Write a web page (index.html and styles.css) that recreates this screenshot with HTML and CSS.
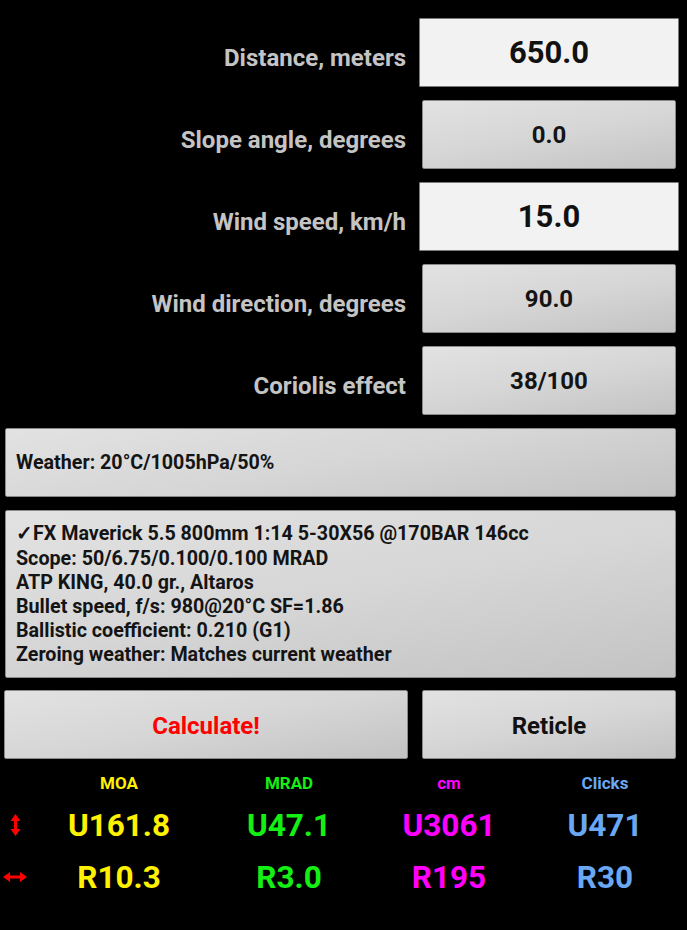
FILE: index.html
```html
<!DOCTYPE html>
<html>
<head>
<meta charset="utf-8">
<link rel="stylesheet" href="styles.css">
</head>
<body>
<div class="app">
  <div class="form">
    <div class="row">
      <div class="label">Distance, meters</div>
      <div class="field"><div class="edit">650.0</div></div>
    </div>
    <div class="row">
      <div class="label">Slope angle, degrees</div>
      <div class="field"><div class="btn">0.0</div></div>
    </div>
    <div class="row">
      <div class="label">Wind speed, km/h</div>
      <div class="field"><div class="edit">15.0</div></div>
    </div>
    <div class="row">
      <div class="label">Wind direction, degrees</div>
      <div class="field"><div class="btn">90.0</div></div>
    </div>
    <div class="row">
      <div class="label">Coriolis effect</div>
      <div class="field"><div class="btn">38/100</div></div>
    </div>
  </div>
  <div class="wide btn weather">Weather: 20°C/1005hPa/50%</div>
  <div class="wide btn info">
    <div>✓FX Maverick 5.5 800mm 1:14 5-30X56 @170BAR 146cc</div>
    <div>Scope: 50/6.75/0.100/0.100 MRAD</div>
    <div>ATP KING, 40.0 gr., Altaros</div>
    <div>Bullet speed, f/s: 980@20°C SF=1.86</div>
    <div>Ballistic coefficient: 0.210 (G1)</div>
    <div>Zeroing weather: Matches current weather</div>
  </div>
  <div class="actions">
    <div class="btn action calc">Calculate!</div>
    <div class="btn action reticle">Reticle</div>
  </div>
  <div class="results">
    <div class="cell"></div>
    <div class="cell head moa">MOA</div>
    <div class="cell head mrad">MRAD</div>
    <div class="cell head cm">cm</div>
    <div class="cell head clicks">Clicks</div>

    <div class="cell icon">
      <svg width="11" height="22" viewBox="0 0 11 22"><path d="M5.5 0 L10.5 7 L7 7 L7 15 L10.5 15 L5.5 22 L0.5 15 L4 15 L4 7 L0.5 7 Z" fill="#ff0000"/></svg>
    </div>
    <div class="cell val moa">U161.8</div>
    <div class="cell val mrad">U47.1</div>
    <div class="cell val cm">U3061</div>
    <div class="cell val clicks">U471</div>

    <div class="cell icon">
      <svg width="24" height="10" viewBox="0 0 24 10"><path d="M0 5 L7 0 L7 3.5 L17 3.5 L17 0 L24 5 L17 10 L17 6.5 L7 6.5 L7 10 Z" fill="#ff0000"/></svg>
    </div>
    <div class="cell val moa">R10.3</div>
    <div class="cell val mrad">R3.0</div>
    <div class="cell val cm">R195</div>
    <div class="cell val clicks">R30</div>
  </div>
</div>
</body>
</html>
```

FILE: styles.css
```css
html, body {
  margin: 0;
  padding: 0;
  background: #000;
}
body {
  font-family: Roboto, "Noto Sans", "Liberation Sans", sans-serif;
  font-weight: 700;
  width: 687px;
  height: 930px;
  overflow: hidden;
}
.app {
  display: flex;
  flex-direction: column;
  padding-top: 18px;
}
.form {
  display: flex;
  flex-direction: column;
  gap: 13px;
}
.row {
  display: flex;
  align-items: center;
  height: 69px;
}
.label {
  width: 406px;
  text-align: right;
  color: #c4c4c4;
  font-size: 24px;
  padding-top: 10px;
}
.field {
  margin-left: 16px;
  width: 254px;
  height: 69px;
  display: flex;
}
.btn {
  box-sizing: border-box;
  background: linear-gradient(170deg, #e2e2e2 0%, #d6d6d6 50%, #c3c3c3 100%);
  border: 1px solid #8a8a8a;
  border-radius: 2px;
  color: #141414;
}
.field .btn {
  flex: 1;
  display: flex;
  align-items: center;
  justify-content: center;
  font-size: 24px;
}
.edit {
  box-sizing: border-box;
  flex: 1;
  margin: 0 -3px;
  background: #f2f2f2;
  border: 1px solid #7a7a7a;
  border-radius: 1px;
  display: flex;
  align-items: center;
  justify-content: center;
  font-size: 31px;
  color: #111;
}
.wide {
  margin-left: 5px;
  width: 671px;
  font-size: 19.7px;
  padding-left: 10px;
}
.weather {
  margin-top: 13px;
  height: 69px;
  display: flex;
  align-items: center;
}
.info {
  margin-top: 13px;
  height: 168px;
  display: flex;
  flex-direction: column;
  justify-content: center;
  line-height: 24.2px;
  padding-top: 2px;
}
.actions {
  margin-top: 12px;
  display: flex;
  height: 69px;
}
.action {
  display: flex;
  align-items: center;
  justify-content: center;
  font-size: 24px;
  padding-top: 3px;
}
.calc {
  margin-left: 4px;
  width: 404px;
  color: #ff0000;
}
.reticle {
  margin-left: 14px;
  width: 254px;
  color: #111;
}
.results {
  display: grid;
  grid-template-columns: 30px 178px 162px 158px 154px;
  grid-template-rows: 44px 42px 62px;
  margin-top: 1px;
}
.cell {
  display: flex;
  align-items: center;
  justify-content: center;
}
.head {
  font-size: 17px;
  padding-top: 2px;
}
.val {
  font-size: 31.5px;
}
.moa { color: #fff200; }
.mrad { color: #14f014; }
.cm { color: #ff00ff; }
.clicks { color: #6aa8f4; }
```
